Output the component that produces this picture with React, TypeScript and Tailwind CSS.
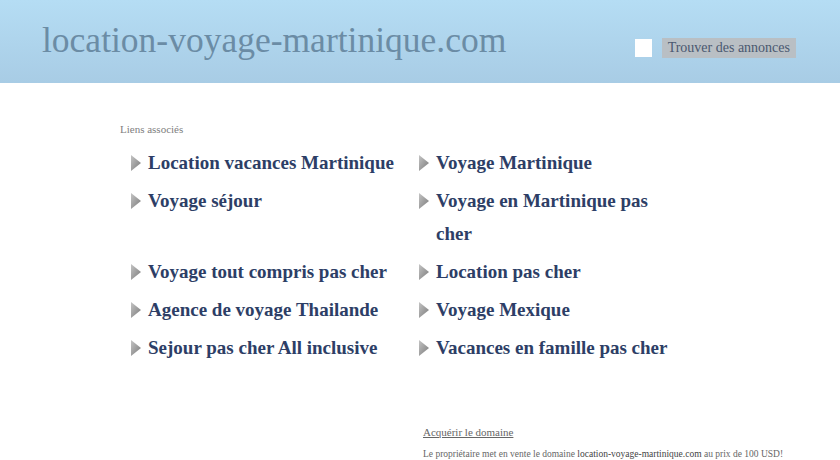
import React from "react"

const links = [
  "Location vacances Martinique",
  "Voyage Martinique",
  "Voyage séjour",
  "Voyage en Martinique pas cher",
  "Voyage tout compris pas cher",
  "Location pas cher",
  "Agence de voyage Thailande",
  "Voyage Mexique",
  "Sejour pas cher All inclusive",
  "Vacances en famille pas cher",
]

function Arrow() {
  return (
    <svg width="10" height="16" viewBox="0 0 10 16" className="mt-[9px] shrink-0">
      <defs>
        <linearGradient id="arr" x1="0" y1="0" x2="1" y2="1">
          <stop offset="0" stopColor="#c4c4c4" />
          <stop offset="1" stopColor="#7a7a7a" />
        </linearGradient>
      </defs>
      <path d="M0 0 L10 8 L0 16 Z" fill="url(#arr)" />
    </svg>
  )
}

function LinkItem({ text }: { text: string }) {
  return (
    <li className="flex gap-[7px] mb-[5px]">
      <Arrow />
      <a href="#" className="text-[19px] font-bold leading-[33px] text-[#2d3e66] max-w-[250px]">
        {text}
      </a>
    </li>
  )
}

export default function App() {
  return (
    <div className="min-h-[460px] bg-white font-['Liberation_Serif',serif]">
      {/* Header */}
      <header className="h-[83px] bg-gradient-to-b from-[#b5ddf4] to-[#a8cce5] flex justify-between pl-[42px] pr-[44px]">
        <h1 className="text-[35.5px] leading-none text-[#6b8ca5] pt-[23px]">location-voyage-martinique.com</h1>
        <div className="flex items-center gap-[10px] pt-[38px] self-start">
          <span className="w-[17px] h-[18px] bg-white" />
          <button className="h-[20px] px-[6px] bg-[#b9bfc4] text-[14px] text-[#4a5870] leading-[20px]">
            Trouver des annonces
          </button>
        </div>
      </header>

      {/* Related links */}
      <section className="pl-[120px] pt-[38px]">
        <p className="text-[11px] text-[#808080] mb-[8px]">Liens associés</p>
        <ul className="grid grid-cols-[288px_288px] pl-[11px]">
          {links.map((t) => (
            <LinkItem key={t} text={t} />
          ))}
        </ul>
      </section>

      {/* Footer */}
      <footer className="pl-[423px] pt-[50px] text-[#666]">
        <a href="#" className="text-[11px] underline">Acquérir le domaine</a>
        <p className="text-[9.5px] leading-[12px] mt-[5px]">
          Le propriétaire met en vente le domaine <span className="text-[#444]">location-voyage-martinique.com</span> au prix de 100 USD!
        </p>
      </footer>
    </div>
  )
}
